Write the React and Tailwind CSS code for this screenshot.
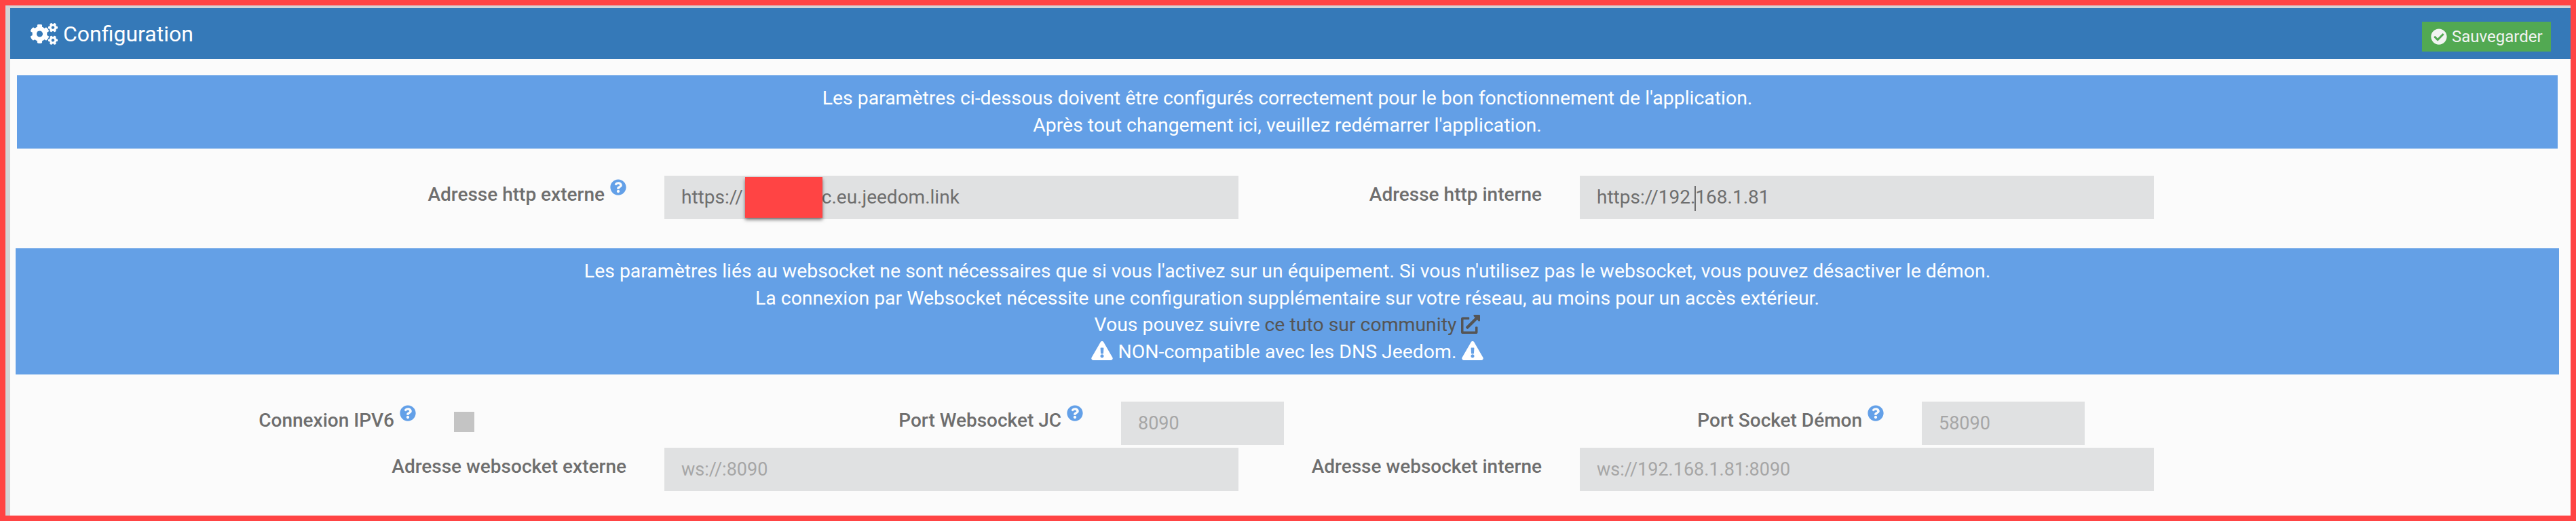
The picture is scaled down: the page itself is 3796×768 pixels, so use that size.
import { FaCogs, FaCheckCircle, FaQuestionCircle, FaExternalLinkAlt, FaExclamationTriangle } from 'react-icons/fa'

const LABEL = 'flex shrink-0 justify-end pr-[56px] pt-[10px] text-[28px] leading-[36px] font-medium text-[#6e6e6e] whitespace-nowrap'
const INPUT = 'h-[64px] shrink-0 bg-[#e0e1e2] px-[25px] text-[27px] text-[#a6a6a6] outline-none'
const INPUT_ACTIVE = 'h-[64px] shrink-0 bg-[#e0e1e2] px-[25px] pt-[14px] text-[28px] leading-[36px] text-[#6e6e6e] whitespace-nowrap'

function Help() {
  return <FaQuestionCircle className="ml-[8px] mt-[-5px] h-[24px] w-[24px] shrink-0 text-[#63a0e8]" />
}

function Label({ className, text, help }) {
  return (
    <div className={`${LABEL} ${className}`}>
      <span>{text}</span>
      {help && <Help />}
    </div>
  )
}

export default function App() {
  return (
    <div className="h-[768px] w-full border-8 border-[#ff4444] bg-[#d3d4d7] pl-[7px] pt-[4px] font-[Roboto,sans-serif]">
      <div className="flex h-full flex-col bg-[#fbfbfb]">
        {/* Header */}
        <div className="flex h-[75px] shrink-0 items-center justify-between bg-[#3579b8] pl-[30px] pr-[29px] text-white">
          <div className="flex items-center gap-[8px]">
            <FaCogs className="h-[32px] w-[40px]" />
            <h1 className="text-[32px] leading-[40px]">Configuration</h1>
          </div>
          <button className="mt-[9px] flex h-[44px] w-[190px] items-center gap-[7px] bg-[#52a952] pl-[13px] text-[24px] text-[#f2f4f2]">
            <FaCheckCircle className="h-[24px] w-[24px]" />
            Sauvegarder
          </button>
        </div>

        <div className="flex flex-col pl-[10px] pr-[19px] pt-[24px]">
          {/* Alerte générale */}
          <div className="bg-[#639fe6] py-[14px] text-center text-[28.4px] leading-[40px] text-white">
            <p>Les paramètres ci-dessous doivent être configurés correctement pour le bon fonctionnement de l'application.</p>
            <p>Après tout changement ici, veuillez redémarrer l'application.</p>
          </div>

          {/* Adresses http */}
          <div className="mt-[40px] flex">
            <Label className="w-[954px]" text="Adresse http externe" help />
            <div className={`${INPUT_ACTIVE} relative w-[846px]`}>
              https://
              <span className="inline-block w-[116px]" />
              c.eu.jeedom.link
              <div className="absolute left-[119px] top-[2px] h-[60px] w-[114px] bg-[#ff4444] shadow-[0_3px_5px_rgba(0,0,0,0.5)]" />
            </div>
            <Label className="w-[503px]" text="Adresse http interne" />
            <div className={`${INPUT_ACTIVE} w-[846px]`}>
              https://192.
              <span className="mx-[-1px] inline-block h-[37px] w-[2px] bg-[#6e6e6e] align-middle" />
              168.1.81
            </div>
          </div>

          {/* Alerte websocket */}
          <div className="mx-[-2px] mt-[43px] bg-[#64a0e6] py-[14px] text-center text-[28.4px] leading-[39.5px] text-white">
            <p>Les paramètres liés au websocket ne sont nécessaires que si vous l'activez sur un équipement. Si vous n'utilisez pas le websocket, vous pouvez désactiver le démon.</p>
            <p>La connexion par Websocket nécessite une configuration supplémentaire sur votre réseau, au moins pour un accès extérieur.</p>
            <p>
              Vous pouvez suivre{' '}
              <a className="text-[#555555]">
                ce tuto sur community <FaExternalLinkAlt className="inline h-[28px] w-[28px] align-[-4px]" />
              </a>
            </p>
            <p>
              <FaExclamationTriangle className="inline h-[28px] w-[32px] align-[-3px]" /> NON-compatible avec les DNS Jeedom.{' '}
              <FaExclamationTriangle className="inline h-[28px] w-[32px] align-[-3px]" />
            </p>
          </div>

          {/* Ports */}
          <div className="mt-[40px] flex">
            <Label className="w-[644px]" text="Connexion IPV6" help />
            <div className="mt-[15px] h-[30px] w-[30px] shrink-0 bg-[#c4c4c4]" />
            <Label className="w-[953px]" text="Port Websocket JC" help />
            <input readOnly disabled value="8090" className={`${INPUT} w-[240px]`} />
            <Label className="w-[940px]" text="Port Socket Démon" help />
            <input readOnly disabled value="58090" className={`${INPUT} w-[240px]`} />
          </div>

          {/* Adresses websocket */}
          <div className="mt-[4px] flex">
            <Label className="w-[954px]" text="Adresse websocket externe" />
            <input readOnly disabled value="ws://:8090" className={`${INPUT} w-[846px]`} />
            <Label className="w-[503px]" text="Adresse websocket interne" />
            <input readOnly disabled value="ws://192.168.1.81:8090" className={`${INPUT} w-[846px]`} />
          </div>
        </div>
      </div>
    </div>
  )
}
